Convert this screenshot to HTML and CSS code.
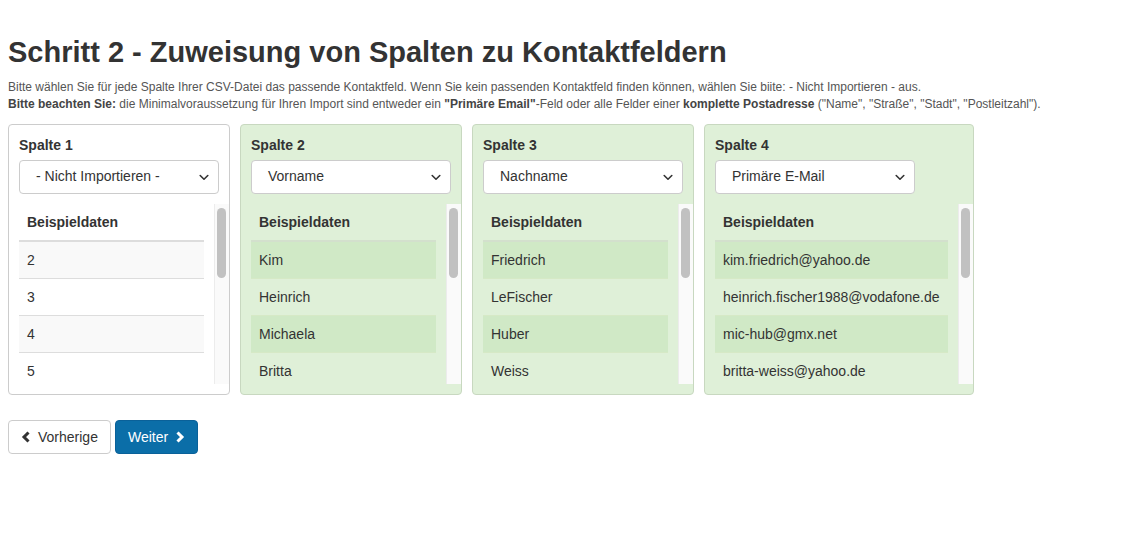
FILE: index.html
```html
<!DOCTYPE html>
<html lang="de">
<head>
<meta charset="utf-8">
<title>Schritt 2</title>
<link rel="stylesheet" href="styles.css">
</head>
<body>
<h2 class="title">Schritt 2 - Zuweisung von Spalten zu Kontaktfeldern</h2>
<p class="intro">Bitte wählen Sie für jede Spalte Ihrer CSV-Datei das passende Kontaktfeld. Wenn Sie kein passenden Kontaktfeld finden können, wählen Sie biite: - Nicht Importieren - aus.<br><b>Bitte beachten Sie:</b> die Minimalvoraussetzung für Ihren Import sind entweder ein <b>"Primäre Email"</b>-Feld oder alle Felder einer <b>komplette Postadresse</b> ("Name", "Straße", "Stadt", "Postleitzahl").</p>

<div class="cards">
  <div class="card">
    <div class="label">Spalte 1</div>
    <div class="select"><span>- Nicht Importieren -</span><svg class="caret" width="10" height="7" viewBox="0 0 10 7"><path d="M1.2 1.5 L5 5.2 L8.8 1.5" fill="none" stroke="#333" stroke-width="1.6" stroke-linecap="round" stroke-linejoin="round"/></svg></div>
    <div class="scroller">
      <div class="viewport">
        <table class="data">
          <thead><tr><th>Beispieldaten</th></tr></thead>
          <tbody>
            <tr><td>2</td></tr><tr><td>3</td></tr><tr><td>4</td></tr><tr><td>5</td></tr>
          </tbody>
        </table>
      </div>
      <div class="track"><div class="thumb"></div></div>
    </div>
  </div>

  <div class="card ok">
    <div class="label">Spalte 2</div>
    <div class="select"><span>Vorname</span><svg class="caret" width="10" height="7" viewBox="0 0 10 7"><path d="M1.2 1.5 L5 5.2 L8.8 1.5" fill="none" stroke="#333" stroke-width="1.6" stroke-linecap="round" stroke-linejoin="round"/></svg></div>
    <div class="scroller">
      <div class="viewport">
        <table class="data">
          <thead><tr><th>Beispieldaten</th></tr></thead>
          <tbody>
            <tr><td>Kim</td></tr><tr><td>Heinrich</td></tr><tr><td>Michaela</td></tr><tr><td>Britta</td></tr>
          </tbody>
        </table>
      </div>
      <div class="track"><div class="thumb"></div></div>
    </div>
  </div>

  <div class="card ok">
    <div class="label">Spalte 3</div>
    <div class="select"><span>Nachname</span><svg class="caret" width="10" height="7" viewBox="0 0 10 7"><path d="M1.2 1.5 L5 5.2 L8.8 1.5" fill="none" stroke="#333" stroke-width="1.6" stroke-linecap="round" stroke-linejoin="round"/></svg></div>
    <div class="scroller">
      <div class="viewport">
        <table class="data">
          <thead><tr><th>Beispieldaten</th></tr></thead>
          <tbody>
            <tr><td>Friedrich</td></tr><tr><td>LeFischer</td></tr><tr><td>Huber</td></tr><tr><td>Weiss</td></tr>
          </tbody>
        </table>
      </div>
      <div class="track"><div class="thumb"></div></div>
    </div>
  </div>

  <div class="card ok">
    <div class="label">Spalte 4</div>
    <div class="select"><span>Primäre E-Mail</span><svg class="caret" width="10" height="7" viewBox="0 0 10 7"><path d="M1.2 1.5 L5 5.2 L8.8 1.5" fill="none" stroke="#333" stroke-width="1.6" stroke-linecap="round" stroke-linejoin="round"/></svg></div>
    <div class="scroller">
      <div class="viewport">
        <table class="data">
          <thead><tr><th>Beispieldaten</th></tr></thead>
          <tbody>
            <tr><td>kim.friedrich@yahoo.de</td></tr><tr><td>heinrich.fischer1988@vodafone.de</td></tr><tr><td>mic-hub@gmx.net</td></tr><tr><td>britta-weiss@yahoo.de</td></tr>
          </tbody>
        </table>
      </div>
      <div class="track"><div class="thumb"></div></div>
    </div>
  </div>
</div>

<div class="actions">
  <button class="btn btn-default"><svg width="10" height="12" viewBox="0 0 10 12"><path d="M7.5 1.5 L3 6 L7.5 10.5" fill="none" stroke="#333" stroke-width="3" stroke-linejoin="miter"/></svg>Vorherige</button>
  <button class="btn btn-primary">Weiter<svg width="10" height="12" viewBox="0 0 10 12"><path d="M2.5 1.5 L7 6 L2.5 10.5" fill="none" stroke="#fff" stroke-width="3" stroke-linejoin="miter"/></svg></button>
</div>
</body>
</html>
```

FILE: styles.css
```css
* { box-sizing: border-box; }

body {
  margin: 0;
  padding: 0 8px;
  font-family: "Liberation Sans", Arial, Helvetica, sans-serif;
  font-size: 14px;
  line-height: 1.42857;
  color: #333;
  background: #fff;
}

.title {
  margin: 36px 0 10px;
  font-size: 29px;
  line-height: 33px;
  font-weight: 700;
  color: #333;
}

.intro {
  margin: 0 0 11px;
  font-size: 12px;
  line-height: 17px;
  color: #555;
}
.intro b { color: #444; }

.cards {
  display: flex;
  align-items: flex-start;
  gap: 10px;
}

.card {
  display: flex;
  flex-direction: column;
  border: 1px solid #ccc;
  border-radius: 4px;
  background: #fff;
  padding: 10px 0 10px 10px;
}
.card.ok {
  background: #dff0d8;
  border-color: #c8d8c0;
}

.label {
  font-weight: 700;
  line-height: 20px;
  margin-bottom: 5px;
}

.select {
  width: 200px;
  height: 34px;
  display: flex;
  align-items: center;
  justify-content: space-between;
  padding: 0 9px 0 16px;
  background: #fff;
  border: 1px solid #ccc;
  border-radius: 4px;
  color: #333;
  font-size: 14px;
}
.caret { flex: none; }

.scroller {
  display: flex;
  margin-top: 10px;
  height: 180px;
}

.viewport {
  overflow: hidden;
  padding-right: 10px;
  height: 180px;
}

.data {
  border-collapse: collapse;
  min-width: 185px;
  white-space: nowrap;
}
.data th, .data td {
  text-align: left;
  padding: 8px;
  line-height: 20px;
}
.data th {
  border-bottom: 2px solid #ddd;
  font-weight: 700;
}
.data td { border-top: 1px solid #ddd; }
.data tbody tr:nth-child(odd) td { background: #f9f9f9; }

.card.ok .data th { border-bottom-color: #d3e0cd; }
.card.ok .data td { border-top-color: #d6e9c6; }
.card.ok .data tbody tr:nth-child(odd) td { background: #d0e9c6; }

.track {
  width: 15px;
  flex: none;
  background: #fafafa;
  border-left: 1px solid #ececec;
  padding: 4px 0 0 2px;
}
.thumb {
  width: 9px;
  height: 70px;
  border-radius: 5px;
  background: #c1c1c1;
}

.actions {
  display: flex;
  gap: 4px;
  margin-top: 25px;
}

.btn {
  display: inline-flex;
  align-items: center;
  gap: 7px;
  height: 34px;
  padding: 0 12px;
  font-family: inherit;
  font-size: 14px;
  border-radius: 4px;
  border: 1px solid #ccc;
  cursor: pointer;
}
.btn-default { background: #fff; color: #333; }
.btn-primary {
  background: #0b6ea8;
  border-color: #0a6199;
  color: #fff;
}
```
